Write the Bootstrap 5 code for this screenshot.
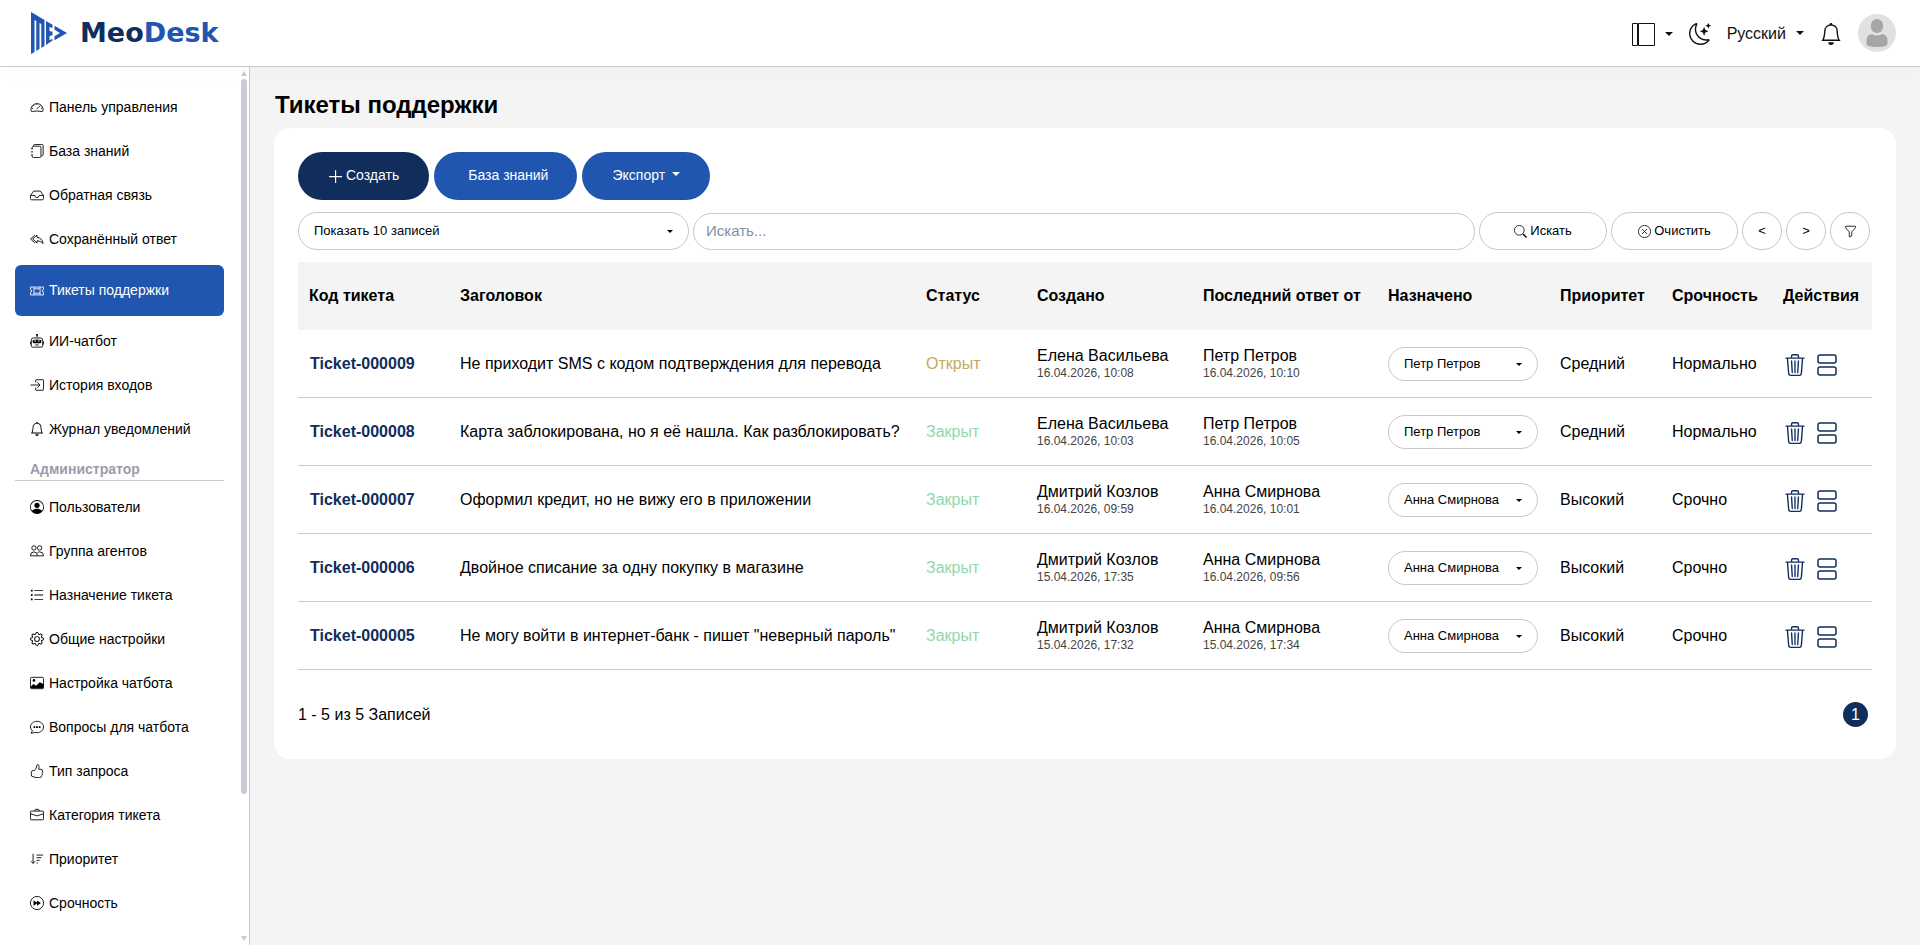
<!DOCTYPE html>
<html lang="ru">
<head>
<meta charset="utf-8">
<meta name="viewport" content="width=device-width, initial-scale=1">
<title>MeoDesk – Тикеты поддержки</title>
<link href="https://cdn.jsdelivr.net/npm/bootstrap@5.3.0/dist/css/bootstrap.min.css" rel="stylesheet">
<style>
:root{--navy:#102d5b;--blue:#2056b0;--line:#c9c8d3;--rule:#c8c8c8;--page:#f4f4f4}
body{font-family:"Liberation Sans",Arial,sans-serif;color:#000;background:var(--page)}
.ico{fill:currentColor;flex:none}
.ln{fill:none;stroke:currentColor}
.topbar{height:67px;border-bottom:1px solid var(--line);padding:0 24px 0 30px;box-shadow:0 0 20px 5px rgba(0,0,0,.02);z-index:2}
.brand{color:var(--blue);font:700 27px/40px "DejaVu Sans",sans-serif;gap:12px}
.brand b{color:var(--navy)}
.plain{background:none;border:0;padding:0;color:#111}
.tray .plain{padding-top:2px}
.plain::after{margin-left:10px}
.side{width:250px;border-right:1px solid var(--line)}
.menu{padding:18px 15px 0;width:239px}
.menu a{display:flex;align-items:center;gap:5px;height:44px;padding:0 15px;color:#000;text-decoration:none;font-size:14px;border-radius:6px}
.menu a.active{height:51px;margin:4px 0 3px;background:var(--blue);color:#fff}
.menu-title{height:30px;margin:0 0 4px;padding:8px 15px 0;border-bottom:1px solid var(--line);font-size:14px;line-height:21px;font-weight:700;color:#9a9cab}
.track{width:6px;margin-right:2px}
.thumb{flex:1 1 0;max-height:715px;border-radius:3px;background:#cbcad5;margin-top:3px}
.page-title{font-size:24px;line-height:28px;font-weight:700;margin:0 1px 9px}
.panel{background:#fff;border-radius:16px;padding:24px 24px 32px}
.acts{gap:5px}
.act{height:48px;padding:0 30px 2px;border-radius:24px;font-size:14px;color:#fff;background:var(--blue);border:0}
.act.dark{background:var(--navy)}
.act.wide{padding:0 29px 2px 34px}
.act::after{margin-left:7px}
.tools{display:grid;grid-template-columns:1fr 2fr 1fr;gap:4px;margin:12px 2px 12px 0}
.pill{height:38px;border:1px solid var(--rule);border-radius:19px;background:#fff;font-size:13px;color:#000;padding:0}
select.pill{appearance:none;padding:0 15px;background:#fff url("data:image/svg+xml,%3Csvg xmlns='http://www.w3.org/2000/svg' width='6' height='3'%3E%3Cpath d='M0 0h6L3 3z'/%3E%3C/svg%3E") no-repeat right 15px center}
input.pill{height:37px;align-self:end;font-size:15px;padding:0 12px 2px;min-width:0}
input.pill::placeholder{color:#8390a0}
.even{flex:1 1 0}
.round{width:40px}
.grid{table-layout:fixed;width:100%;border-collapse:separate;border-spacing:0}
.c1{width:150px}.c2{width:466px}.c3{width:111px}.c4{width:166px}.c5{width:185px}.c6{width:172px}.c7{width:112px}.c8{width:111px}.c9{width:101px}
.grid th,.grid td{height:68px;padding:0 12px;vertical-align:middle;white-space:nowrap;line-height:20px}
.grid th{background:var(--page);font-weight:700}
.grid th:first-child{padding:0 11px}
.grid td{border-bottom:1px solid var(--rule)}
.grid td a{color:var(--navy);font-weight:700;text-decoration:none}
.grid time{display:block;font-size:12px;line-height:15px;color:#444}
.grid td select.pill{height:34px;width:150px;margin-top:1px}
.open{color:#c4a85e}.closed{color:#93d6ab}
.grid td button{background:none;border:0;padding:0;color:var(--navy);margin:2px 11px 0 1px}
.grid td button + button{margin:2px 0 0}
.pageno{width:25px;height:25px;border-radius:50%;background:var(--navy);color:#fff;text-decoration:none;margin-right:4px}
</style>
</head>
<body>
<svg class="d-none">
<symbol id="speed" viewBox="0 0 16 16"><path class="ln" d="M1.2 12.8A7 7 0 1 1 14.800 12.800Q14.400 13.500 13.400 13.200Q8 11.800 2.600 13.200Q1.600 13.500 1.200 12.800Z"/><path class="ln" d="M8 4v1.500M3.700 5.700l1 1M2 9.500h1.600M12.500 9.500H14M12 6L7.500 10.500"/></symbol>
<symbol id="journals" viewBox="0 0 16 16"><path class="ln" d="M4 2.500V2q0-1.500 1.500-1.500h8Q15 .5 15 2v10q0 1.500-1.500 1.500H13M2.500 5V4q0-1.500 1.500-1.500h7Q12.500 2.500 12.500 4v10q0 1.500-1.500 1.500H4Q2.500 15.500 2.500 14v-1M1 5.500h2.500M1 9h2.500M1 12.500h2.500"/></symbol>
<symbol id="inbox" viewBox="0 0 16 16"><path class="ln" d="M4.200 3.500h7.600L15.500 8.500v3.500q0 1.500-1.500 1.500H2Q.5 13.500.5 12V8.500zM.5 8.500H5.500Q6 11 8 11t2.500-2.500h5"/></symbol>
<symbol id="reply" viewBox="0 0 16 16"><path class="ln" d="M8 3.500L3 8l5 4.500V10q4 0 7 3Q14 7 8 6zM5.500 3.500L.700 8l4.800 4.500"/></symbol>
<symbol id="ticket" viewBox="0 0 16 16"><path class="ln" d="M.5 3.500h15v3q-1.500.2-1.500 1.500t1.500 1.500v3H.5v-3Q2 9.300 2 8T.5 6.500zM4.500 3.500v9M11.500 3.500v9M4.500 5.500h7M4.500 10.500h7"/></symbol>
<symbol id="robot" viewBox="0 0 16 16"><path class="ln" d="M8 1v3M4 4.500h8q2.500 0 2.500 2.500v6.500q0 1.500-1.500 1.500H3q-1.500 0-1.500-1.500V7Q1.500 4.500 4 4.500zM.5 8.500v3.500M15.500 8.500v3.500M6 12.500h4"/><path d="M3 7q5-1.400 10 0v2q0 1.500-2 1.500H5Q3 10.500 3 9zM7 0h2v2H7z"/><path d="M5 7.500h2v1H5zM9 7.500h2v1H9z" fill="#fff"/></symbol>
<symbol id="enter" viewBox="0 0 16 16"><path class="ln" d="M6.500 5V2.500q0-.5.5-.5h8q.5 0 .5.500v11q0 .5-.5.500H7q-.5 0-.5-.5V11M.5 8H11M8.500 5l3 3-3 3"/></symbol>
<symbol id="bell" viewBox="0 0 16 16"><path d="M8 16a2 2 0 0 0 2-2H6a2 2 0 0 0 2 2zM8 1.918l-.797.161A4.002 4.002 0 0 0 4 6c0 .628-.134 2.197-.459 3.742-.16.767-.376 1.566-.663 2.258h10.244c-.287-.692-.502-1.490-.663-2.258C12.134 8.197 12 6.628 12 6a4.002 4.002 0 0 0-3.203-3.920L8 1.917zM14.220 12c.223.447.481.801.780 1H1c.299-.199.557-.553.780-1C2.680 10.200 3 6.880 3 6c0-2.420 1.720-4.440 4.005-4.901a1 1 0 1 1 1.990 0A5.002 5.002 0 0 1 13 6c0 .880.320 4.200 1.220 6z"/></symbol>
<symbol id="user" viewBox="0 0 16 16"><path d="M11 6a3 3 0 1 1-6 0 3 3 0 0 1 6 0z"/><path fill-rule="evenodd" d="M0 8a8 8 0 1 1 16 0A8 8 0 0 1 0 8zm8-7a7 7 0 0 0-5.468 11.370C3.242 11.226 4.805 10 8 10s4.757 1.225 5.468 2.370A7 7 0 0 0 8 1z"/></symbol>
<symbol id="people" viewBox="0 0 16 16"><circle class="ln" cx="4.500" cy="4.500" r="2.500"/><circle class="ln" cx="11" cy="4.500" r="2.500"/><path class="ln" d="M.5 13.500Q.5 9 4.500 9t4 4.500zM8.500 10Q9.500 9 11 9q4.500 0 4.500 4.500H8.500"/></symbol>
<symbol id="list" viewBox="0 0 16 16"><path d="M5 2.500h10v1H5zM5 7.500h10v1H5zM5 12.500h10v1H5zM1 2h2v2H1zM1 7h2v2H1zM1 12h2v2H1z"/></symbol>
<symbol id="gear" viewBox="0 0 16 16"><path d="M8 4.754a3.246 3.246 0 1 0 0 6.492 3.246 3.246 0 0 0 0-6.492zM5.754 8a2.246 2.246 0 1 1 4.492 0 2.246 2.246 0 0 1-4.492 0z"/><path d="M9.796 1.343c-.527-1.790-3.065-1.790-3.592 0l-.094.319a.873.873 0 0 1-1.255.520l-.292-.160c-1.640-.892-3.433.902-2.540 2.541l.159.292a.873.873 0 0 1-.520 1.255l-.319.094c-1.790.527-1.790 3.065 0 3.592l.319.094a.873.873 0 0 1 .520 1.255l-.160.292c-.892 1.640.901 3.434 2.541 2.540l.292-.159a.873.873 0 0 1 1.255.520l.094.319c.527 1.790 3.065 1.790 3.592 0l.094-.319a.873.873 0 0 1 1.255-.520l.292.160c1.640.893 3.434-.902 2.540-2.541l-.159-.292a.873.873 0 0 1 .520-1.255l.319-.094c1.790-.527 1.790-3.065 0-3.592l-.319-.094a.873.873 0 0 1-.520-1.255l.160-.292c.893-1.640-.902-3.433-2.541-2.540l-.292.159a.873.873 0 0 1-1.255-.520l-.094-.319zm-2.633.283c.246-.835 1.428-.835 1.674 0l.094.319a1.873 1.873 0 0 0 2.693 1.115l.291-.160c.764-.415 1.600.420 1.184 1.185l-.159.292a1.873 1.873 0 0 0 1.116 2.692l.318.094c.835.246.835 1.428 0 1.674l-.319.094a1.873 1.873 0 0 0-1.115 2.693l.160.291c.415.764-.420 1.600-1.185 1.184l-.291-.159a1.873 1.873 0 0 0-2.693 1.116l-.094.318c-.246.835-1.428.835-1.674 0l-.094-.319a1.873 1.873 0 0 0-2.692-1.115l-.292.160c-.764.415-1.600-.420-1.184-1.185l.159-.291A1.873 1.873 0 0 0 1.945 8.930l-.319-.094c-.835-.246-.835-1.428 0-1.674l.319-.094A1.873 1.873 0 0 0 3.060 4.377l-.160-.292c-.415-.764.420-1.600 1.185-1.184l.292.159a1.873 1.873 0 0 0 2.692-1.115l.094-.319z"/></symbol>
<symbol id="image" viewBox="0 0 16 16"><path class="ln" d="M2 1.500h12q1.500 0 1.500 1.500v10q0 1.500-1.500 1.500H2Q.5 14.500.5 13V3Q.5 1.500 2 1.500z"/><path d="M1 12l3-3 3 2 4-4 4.500 2v5H1z"/><circle cx="4.500" cy="5" r="1.500"/></symbol>
<symbol id="chat" viewBox="0 0 16 16"><path class="ln" d="M1 15q1.700-1 1.600-3Q.5 10.300.5 8c0-3.600 3.300-6.500 7.500-6.500S15.500 4.400 15.500 8 12.200 14.500 8 14.500q-1.200 0-2.500-.4Q3.500 15.200 1 15z"/><path d="M4 7h2v2H4zM7 7h2v2H7zM10 7h2v2h-2z"/></symbol>
<symbol id="thumb" viewBox="0 0 16 16"><path class="ln" d="M5 7.500H3.500Q1.500 7.500 1.500 9.500v3q0 2 2 2 2 1 5 1H11q2 0 2.200-2 1.500-1.200.8-2.700 1.200-1.300.2-2.600Q14.500 6 12.500 6H10Q11 .5 8.600.5 8 .5 7.800 2 7.500 5 5 7.500z"/></symbol>
<symbol id="case" viewBox="0 0 16 16"><path class="ln" d="M1.500 3.500h13q1 0 1 1v8q0 1-1 1h-13q-1 0-1-1v-8q0-1 1-1zM5.500 3.500Q5.500 1.500 6.500 1.500h3q1 0 1 2M.5 6.500L8 9l7.500-2.500"/></symbol>
<symbol id="sort" viewBox="0 0 16 16"><path class="ln" d="M3.500 2v11M1 10.500L3.500 13 6 10.500M7.500 3.500H15M7.500 6.500h5.500M7.500 9.500h3.500M7.500 12.500h1.500"/></symbol>
<symbol id="forward" viewBox="0 0 16 16"><circle class="ln" cx="8" cy="8" r="7.500"/><path d="M4 5l4 2.500V5l4.500 3L8 11V8.500L4 11z"/></symbol>
<symbol id="moon" viewBox="0 0 16 16"><path d="M6 .278a.768.768 0 0 1 .08.858 7.208 7.208 0 0 0-.878 3.460c0 4.021 3.278 7.277 7.318 7.277.527 0 1.040-.055 1.533-.160a.787.787 0 0 1 .810.316.733.733 0 0 1-.031.893A8.349 8.349 0 0 1 8.344 16C3.734 16 0 12.286 0 7.710 0 4.266 2.114 1.312 5.124.060A.752.752 0 0 1 6 .278zM4.858 1.311A7.269 7.269 0 0 0 1.025 7.710c0 4.020 3.279 7.276 7.319 7.276a7.316 7.316 0 0 0 5.205-2.162c-.337.042-.680.063-1.029.063-4.610 0-8.343-3.714-8.343-8.290 0-1.167.242-2.278.681-3.286z"/><path d="M10.794 3.148a.217.217 0 0 1 .412 0l.387 1.162c.173.518.579.924 1.097 1.097l1.162.387a.217.217 0 0 1 0 .412l-1.162.387a1.734 1.734 0 0 0-1.097 1.097l-.387 1.162a.217.217 0 0 1-.412 0l-.387-1.162A1.734 1.734 0 0 0 9.310 6.593l-1.162-.387a.217.217 0 0 1 0-.412l1.162-.387a1.734 1.734 0 0 0 1.097-1.097zM13.863.099a.145.145 0 0 1 .274 0l.258.774c.115.346.386.617.732.732l.774.258a.145.145 0 0 1 0 .274l-.774.258a1.156 1.156 0 0 0-.732.732l-.258.774a.145.145 0 0 1-.274 0l-.258-.774a1.156 1.156 0 0 0-.732-.732l-.774-.258a.145.145 0 0 1 0-.274l.774-.258c.346-.115.617-.386.732-.732z"/></symbol>
<symbol id="search" viewBox="0 0 16 16"><circle class="ln" cx="6.500" cy="6.500" r="6"/><path d="M10.500 11.700l1.200-1.200 4 4q.5 1.200-1.200 1.200z"/></symbol>
<symbol id="clear" viewBox="0 0 16 16"><circle class="ln" cx="8" cy="8" r="7.500"/><path class="ln" d="M5 5l6 6M11 5l-6 6"/></symbol>
<symbol id="funnel" viewBox="0 0 16 16"><path class="ln" d="M2 1.500h12v2L9.500 8.500v5l-3 1v-6L2 3.500z"/></symbol>
<symbol id="plus" viewBox="0 0 12 12"><path class="ln" d="M6.500 1v11M1 6.500h11"/></symbol>
<symbol id="trash" viewBox="0 0 16 16"><path d="M6.500 1h3a.5.5 0 0 1 .5.5v1H6v-1a.5.5 0 0 1 .5-.5ZM11 2.500v-1A1.500 1.500 0 0 0 9.500 0h-3A1.500 1.500 0 0 0 5 1.500v1H1.500a.5.5 0 0 0 0 1h.538l.853 10.660A2 2 0 0 0 4.885 16h6.230a2 2 0 0 0 1.994-1.840l.853-10.660h.538a.5.5 0 0 0 0-1H11Zm1.958 1-.846 10.580a1 1 0 0 1-.997.920h-6.230a1 1 0 0 1-.997-.920L3.042 3.500h9.916Zm-7.487 1a.5.5 0 0 1 .528.470l.5 8.500a.5.5 0 0 1-.998.060L5 5.030a.5.5 0 0 1 .470-.530Zm5.058 0a.5.5 0 0 1 .470.530l-.5 8.500a.5.5 0 1 1-.998-.060l.5-8.500a.5.5 0 0 1 .528-.470ZM8 4.500a.5.5 0 0 1 .5.5v8.500a.5.5 0 0 1-1 0V5a.5.5 0 0 1 .5-.5Z"/></symbol>
<symbol id="stack" viewBox="0 0 20 22"><rect class="ln" x="1" y="1" width="18" height="8" rx="2" stroke-width="1.500"/><rect class="ln" x="1" y="13" width="18" height="8" rx="2" stroke-width="1.500"/></symbol>
</svg>
<div class="d-flex flex-column vh-100">
<header class="topbar bg-white d-flex align-items-center justify-content-between position-relative flex-shrink-0">
  <a class="brand d-flex align-items-center text-decoration-none" href="#">
    <svg width="38" height="42" viewBox="0 0 38 42" aria-hidden="true"><path fill="#2056b0" d="M1 0L14.500 8v26l-3.200 2V12l-1.800-1v26L6.300 39V9L4.500 8v32L1 42zM16 9l6.500 3.800v3.400l-3-1.500v4.300l3 .8v3.400l-3 .8v4.300l3-1.500v1.700L16 33zM24.500 13.700L37 21l-12.500 7.300v-4L30 21l-5.500-3.300z"/></svg>
    <span><b>Meo</b>Desk</span></a>
  <div class="tray d-flex align-items-center">
    <button class="plain dropdown-toggle d-flex align-items-center me-3" type="button" aria-label="Макет"><svg class="ico" width="23" height="23" viewBox="0 0 23 23"><path class="ln" d="M.5.5h5v22h-5zM6.500.5h16v22h-16z"/></svg></button>
    <button class="plain d-flex me-3" type="button" aria-label="Тёмная тема"><svg class="ico" width="22" height="22"><use href="#moon"/></svg></button>
    <button class="plain dropdown-toggle" type="button">Русский</button>
    <button class="plain d-flex ms-3 me-3" type="button" aria-label="Уведомления"><svg class="ico" width="22" height="22"><use href="#bell"/></svg></button>
    <svg width="38" height="38" viewBox="0 0 38 38" role="img" aria-label="Профиль"><circle cx="19" cy="19" r="19" fill="#e1e1e1"/><rect x="13" y="5" width="12" height="14" rx="6" fill="#a6a6a6"/><path fill="#a6a6a6" d="M14 20q5 3 10 0 5.500 1 5.500 6v4q0 3-10.500 3T8.500 30v-4Q8.500 21 14 20z"/></svg>
  </div>
</header>
<div class="d-flex flex-grow-1 overflow-hidden">
  <aside class="side bg-white d-flex flex-shrink-0 justify-content-between">
    <nav class="menu">
      <a href="#"><svg class="ico" width="14" height="14"><use href="#speed"/></svg>Панель управления</a>
      <a href="#"><svg class="ico" width="14" height="14"><use href="#journals"/></svg>База знаний</a>
      <a href="#"><svg class="ico" width="14" height="14"><use href="#inbox"/></svg>Обратная связь</a>
      <a href="#"><svg class="ico" width="14" height="14"><use href="#reply"/></svg>Сохранённый ответ</a>
      <a href="#" class="active" aria-current="page"><svg class="ico" width="14" height="14"><use href="#ticket"/></svg>Тикеты поддержки</a>
      <a href="#"><svg class="ico" width="14" height="14"><use href="#robot"/></svg>ИИ-чатбот</a>
      <a href="#"><svg class="ico" width="14" height="14"><use href="#enter"/></svg>История входов</a>
      <a href="#"><svg class="ico" width="14" height="14"><use href="#bell"/></svg>Журнал уведомлений</a>
      <h2 class="menu-title">Администратор</h2>
      <a href="#"><svg class="ico" width="14" height="14"><use href="#user"/></svg>Пользователи</a>
      <a href="#"><svg class="ico" width="14" height="14"><use href="#people"/></svg>Группа агентов</a>
      <a href="#"><svg class="ico" width="14" height="14"><use href="#list"/></svg>Назначение тикета</a>
      <a href="#"><svg class="ico" width="14" height="14"><use href="#gear"/></svg>Общие настройки</a>
      <a href="#"><svg class="ico" width="14" height="14"><use href="#image"/></svg>Настройка чатбота</a>
      <a href="#"><svg class="ico" width="14" height="14"><use href="#chat"/></svg>Вопросы для чатбота</a>
      <a href="#"><svg class="ico" width="14" height="14"><use href="#thumb"/></svg>Тип запроса</a>
      <a href="#"><svg class="ico" width="14" height="14"><use href="#case"/></svg>Категория тикета</a>
      <a href="#"><svg class="ico" width="14" height="14"><use href="#sort"/></svg>Приоритет</a>
      <a href="#"><svg class="ico" width="14" height="14"><use href="#forward"/></svg>Срочность</a>
    </nav>
    <div class="track d-flex flex-column" aria-hidden="true">
      <svg width="6" height="5" viewBox="0 0 6 5" fill="#cbcad5" class="mt-1 mb-0 flex-shrink-0"><path d="M3 0l3 5H0z"/></svg>
      <div class="thumb"></div>
      <svg width="6" height="5" viewBox="0 0 6 5" fill="#cbcad5" class="mt-auto mb-1 flex-shrink-0"><path d="M0 0h6L3 5z"/></svg>
    </div>
  </aside>
  <main class="flex-grow-1 p-4 overflow-hidden">
    <h1 class="page-title">Тикеты поддержки</h1>
    <section class="panel">
      <div class="acts d-flex">
        <button class="act dark" type="button"><svg class="ico me-1" width="14" height="14"><use href="#plus"/></svg>Создать</button>
        <button class="act wide" type="button">База знаний</button>
        <button class="act dropdown-toggle" type="button">Экспорт</button>
      </div>
      <form class="tools">
        <select class="pill" aria-label="Записей на странице"><option>Показать 10 записей</option></select>
        <input class="pill" type="search" placeholder="Искать..." aria-label="Искать">
        <div class="d-flex gap-1">
          <button class="pill even" type="button"><svg class="ico" width="13" height="13"><use href="#search"/></svg> Искать</button>
          <button class="pill even" type="button"><svg class="ico" width="13" height="13"><use href="#clear"/></svg> Очистить</button>
          <button class="pill round" type="button">&lt;</button>
          <button class="pill round" type="button">&gt;</button>
          <button class="pill round" type="button" aria-label="Фильтр"><svg class="ico" width="13" height="13"><use href="#funnel"/></svg></button>
        </div>
      </form>
      <table class="grid">
        <colgroup><col class="c1"><col class="c2"><col class="c3"><col class="c4"><col class="c5"><col class="c6"><col class="c7"><col class="c8"><col class="c9"></colgroup>
        <thead><tr><th>Код тикета</th><th>Заголовок</th><th>Статус</th><th>Создано</th><th>Последний ответ от</th><th>Назначено</th><th>Приоритет</th><th>Срочность</th><th>Действия</th></tr></thead>
        <tbody>
        <tr><td><a href="#">Ticket-000009</a></td><td>Не приходит SMS с кодом подтверждения для перевода</td><td class="open">Открыт</td><td>Елена Васильева<time>16.04.2026, 10:08</time></td><td>Петр Петров<time>16.04.2026, 10:10</time></td><td><select class="pill" aria-label="Назначено"><option>Петр Петров</option></select></td><td>Средний</td><td>Нормально</td><td><button type="button" aria-label="Удалить"><svg class="ico" width="22" height="22"><use href="#trash"/></svg></button><button type="button" aria-label="Подробнее"><svg class="ico" width="20" height="22"><use href="#stack"/></svg></button></td></tr>
        <tr><td><a href="#">Ticket-000008</a></td><td>Карта заблокирована, но я её нашла. Как разблокировать?</td><td class="closed">Закрыт</td><td>Елена Васильева<time>16.04.2026, 10:03</time></td><td>Петр Петров<time>16.04.2026, 10:05</time></td><td><select class="pill" aria-label="Назначено"><option>Петр Петров</option></select></td><td>Средний</td><td>Нормально</td><td><button type="button" aria-label="Удалить"><svg class="ico" width="22" height="22"><use href="#trash"/></svg></button><button type="button" aria-label="Подробнее"><svg class="ico" width="20" height="22"><use href="#stack"/></svg></button></td></tr>
        <tr><td><a href="#">Ticket-000007</a></td><td>Оформил кредит, но не вижу его в приложении</td><td class="closed">Закрыт</td><td>Дмитрий Козлов<time>16.04.2026, 09:59</time></td><td>Анна Смирнова<time>16.04.2026, 10:01</time></td><td><select class="pill" aria-label="Назначено"><option>Анна Смирнова</option></select></td><td>Высокий</td><td>Срочно</td><td><button type="button" aria-label="Удалить"><svg class="ico" width="22" height="22"><use href="#trash"/></svg></button><button type="button" aria-label="Подробнее"><svg class="ico" width="20" height="22"><use href="#stack"/></svg></button></td></tr>
        <tr><td><a href="#">Ticket-000006</a></td><td>Двойное списание за одну покупку в магазине</td><td class="closed">Закрыт</td><td>Дмитрий Козлов<time>15.04.2026, 17:35</time></td><td>Анна Смирнова<time>16.04.2026, 09:56</time></td><td><select class="pill" aria-label="Назначено"><option>Анна Смирнова</option></select></td><td>Высокий</td><td>Срочно</td><td><button type="button" aria-label="Удалить"><svg class="ico" width="22" height="22"><use href="#trash"/></svg></button><button type="button" aria-label="Подробнее"><svg class="ico" width="20" height="22"><use href="#stack"/></svg></button></td></tr>
        <tr><td><a href="#">Ticket-000005</a></td><td>Не могу войти в интернет-банк - пишет "неверный пароль"</td><td class="closed">Закрыт</td><td>Дмитрий Козлов<time>15.04.2026, 17:32</time></td><td>Анна Смирнова<time>15.04.2026, 17:34</time></td><td><select class="pill" aria-label="Назначено"><option>Анна Смирнова</option></select></td><td>Высокий</td><td>Срочно</td><td><button type="button" aria-label="Удалить"><svg class="ico" width="22" height="22"><use href="#trash"/></svg></button><button type="button" aria-label="Подробнее"><svg class="ico" width="20" height="22"><use href="#stack"/></svg></button></td></tr>
        </tbody>
      </table>
      <div class="d-flex justify-content-between align-items-center mt-4 pt-2">
        <span>1 - 5 из 5 Записей</span>
        <a class="pageno d-flex align-items-center justify-content-center" href="#">1</a>
      </div>
    </section>
  </main>
</div>
</div>
<script src="https://cdn.jsdelivr.net/npm/bootstrap@5.3.0/dist/js/bootstrap.bundle.min.js"></script>
</body>
</html>
